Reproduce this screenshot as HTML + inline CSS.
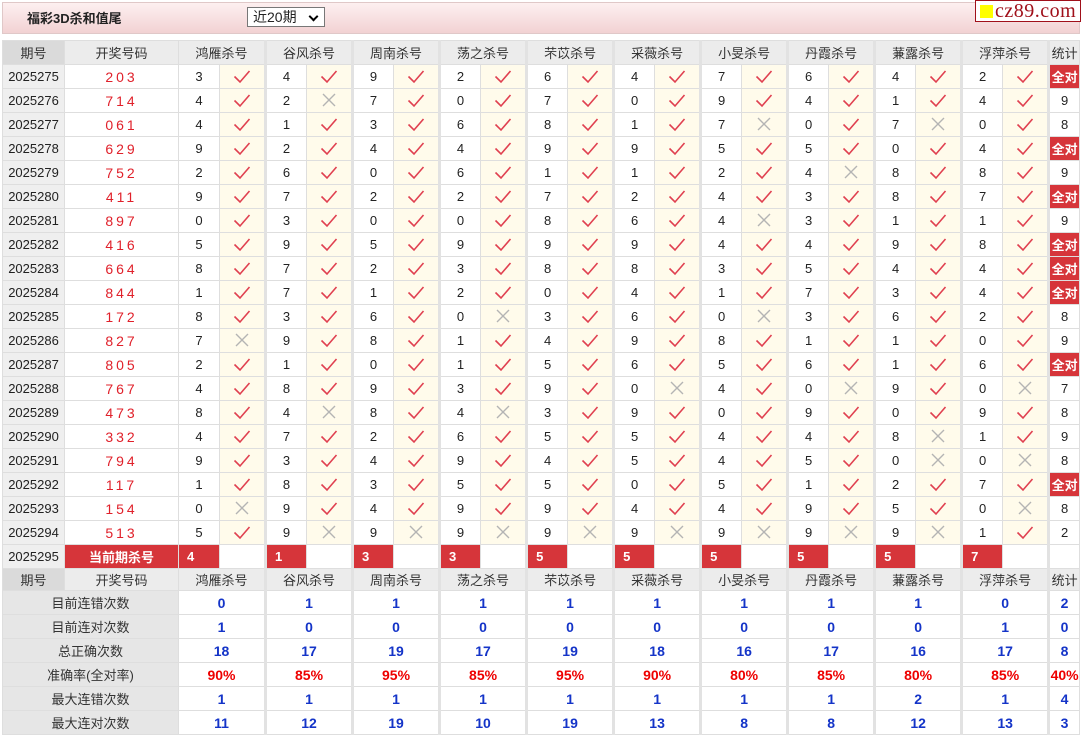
<!DOCTYPE html>
<html><head><meta charset="utf-8"><style>
*{margin:0;padding:0;box-sizing:border-box}
body{width:1082px;height:737px;background:#fff;font-family:"Liberation Sans","Noto Sans CJK SC",sans-serif;font-size:13px;color:#222;position:relative;overflow:hidden}
.bn{position:absolute;left:2px;top:2px;width:1078px;height:32px;background:linear-gradient(#fdf0f0,#f2d2d3);border:1px solid #e0c8c8}
.tt{position:absolute;left:24px;top:5px;font-weight:bold;font-size:13px;color:#222}
.sel{position:absolute;left:244px;top:4px;width:78px;height:20px;border:1px solid #777;background:#fff;font-size:14px;padding-left:5px;line-height:18px}
.sel:after{content:"";position:absolute;right:7px;top:5px;width:5px;height:5px;border-right:2px solid #000;border-bottom:2px solid #000;transform:rotate(45deg)}
.lg{position:absolute;left:975px;top:0;width:106px;height:22px;border:1px solid #a0101a;background:#fff;font-family:"Liberation Serif",serif;font-size:20px;color:#a0101a;line-height:20px;padding-left:4px;letter-spacing:.5px}
.lg i{display:inline-block;width:13px;height:13px;background:#ffff00;margin-right:2px;vertical-align:-1px}
table{position:absolute;left:2px;top:40px;border-collapse:collapse;table-layout:fixed;width:1078px}
td{height:24px;border:1px solid #dedede;text-align:center;padding:0;font-size:13px;white-space:nowrap}
tr.h2 td{height:22px}
tr.h td{background:#ececec;color:#333}
tr.h td.p{background:#dadada}
td.p{background:#efefef;font-size:13px}
td.k{color:#e0202a;letter-spacing:3px;font-size:14px}
td.m{background:#fffbeb;border-right:3px solid #e2e2e2}
td.gs{border-right:3px solid #e2e2e2}
td.q{background:#d6353a;color:#fff;font-weight:bold;text-align:left;padding-left:8px}
td.q2{background:#d6353a;color:#fff;font-weight:bold}
td.a{background:#d6353a;color:#fff;font-weight:bold}
td.l{background:#e6e6e6;color:#333}
td.b{color:#1434c8;font-weight:bold;font-size:14px;border-right:3px solid #e2e2e2}
td.r{color:#e00;font-weight:bold;font-size:14px;border-right:3px solid #e2e2e2}
td.bs{color:#1434c8;font-weight:bold;font-size:14px}
td.rs{color:#e00;font-weight:bold;font-size:14px}
svg{width:20px;height:18px;display:block;margin:0 auto}
</style></head><body>
<svg style="display:none"><defs>
<symbol id="c" viewBox="0 0 20 18"><path d="M2.5 8.5 L8 14 L17.5 3" fill="none" stroke="#e04050" stroke-width="1.6"/></symbol>
<symbol id="x" viewBox="0 0 20 18"><path d="M4 2 L16 14 M16 2 L4 14" fill="none" stroke="#b4b4b4" stroke-width="1.4"/></symbol>
</defs></svg>
<div class="bn"><div class="tt">福彩3D杀和值尾</div><div class="sel">近20期</div></div>
<div class="lg"><i></i>cz89.com</div>
<table>
<colgroup><col style="width:62px"><col style="width:114px">
<col style="width:41px"><col style="width:46px"><col style="width:41px"><col style="width:46px"><col style="width:41px"><col style="width:46px"><col style="width:41px"><col style="width:46px"><col style="width:41px"><col style="width:46px"><col style="width:41px"><col style="width:46px"><col style="width:41px"><col style="width:46px"><col style="width:41px"><col style="width:46px"><col style="width:41px"><col style="width:46px"><col style="width:41px"><col style="width:46px">
<col></colgroup>
<tr class="h"><td class="p">期号</td><td>开奖号码</td><td colspan="2" class="gs">鸿雁杀号</td><td colspan="2" class="gs">谷风杀号</td><td colspan="2" class="gs">周南杀号</td><td colspan="2" class="gs">荡之杀号</td><td colspan="2" class="gs">芣苡杀号</td><td colspan="2" class="gs">采薇杀号</td><td colspan="2" class="gs">小旻杀号</td><td colspan="2" class="gs">丹霞杀号</td><td colspan="2" class="gs">蒹露杀号</td><td colspan="2" class="gs">浮萍杀号</td><td>统计</td></tr>
<tr><td class="p">2025275</td><td class="k">203</td><td>3</td><td class="m"><svg><use href="#c"/></svg></td><td>4</td><td class="m"><svg><use href="#c"/></svg></td><td>9</td><td class="m"><svg><use href="#c"/></svg></td><td>2</td><td class="m"><svg><use href="#c"/></svg></td><td>6</td><td class="m"><svg><use href="#c"/></svg></td><td>4</td><td class="m"><svg><use href="#c"/></svg></td><td>7</td><td class="m"><svg><use href="#c"/></svg></td><td>6</td><td class="m"><svg><use href="#c"/></svg></td><td>4</td><td class="m"><svg><use href="#c"/></svg></td><td>2</td><td class="m"><svg><use href="#c"/></svg></td><td class="a">全对</td></tr>
<tr><td class="p">2025276</td><td class="k">714</td><td>4</td><td class="m"><svg><use href="#c"/></svg></td><td>2</td><td class="m"><svg><use href="#x"/></svg></td><td>7</td><td class="m"><svg><use href="#c"/></svg></td><td>0</td><td class="m"><svg><use href="#c"/></svg></td><td>7</td><td class="m"><svg><use href="#c"/></svg></td><td>0</td><td class="m"><svg><use href="#c"/></svg></td><td>9</td><td class="m"><svg><use href="#c"/></svg></td><td>4</td><td class="m"><svg><use href="#c"/></svg></td><td>1</td><td class="m"><svg><use href="#c"/></svg></td><td>4</td><td class="m"><svg><use href="#c"/></svg></td><td>9</td></tr>
<tr><td class="p">2025277</td><td class="k">061</td><td>4</td><td class="m"><svg><use href="#c"/></svg></td><td>1</td><td class="m"><svg><use href="#c"/></svg></td><td>3</td><td class="m"><svg><use href="#c"/></svg></td><td>6</td><td class="m"><svg><use href="#c"/></svg></td><td>8</td><td class="m"><svg><use href="#c"/></svg></td><td>1</td><td class="m"><svg><use href="#c"/></svg></td><td>7</td><td class="m"><svg><use href="#x"/></svg></td><td>0</td><td class="m"><svg><use href="#c"/></svg></td><td>7</td><td class="m"><svg><use href="#x"/></svg></td><td>0</td><td class="m"><svg><use href="#c"/></svg></td><td>8</td></tr>
<tr><td class="p">2025278</td><td class="k">629</td><td>9</td><td class="m"><svg><use href="#c"/></svg></td><td>2</td><td class="m"><svg><use href="#c"/></svg></td><td>4</td><td class="m"><svg><use href="#c"/></svg></td><td>4</td><td class="m"><svg><use href="#c"/></svg></td><td>9</td><td class="m"><svg><use href="#c"/></svg></td><td>9</td><td class="m"><svg><use href="#c"/></svg></td><td>5</td><td class="m"><svg><use href="#c"/></svg></td><td>5</td><td class="m"><svg><use href="#c"/></svg></td><td>0</td><td class="m"><svg><use href="#c"/></svg></td><td>4</td><td class="m"><svg><use href="#c"/></svg></td><td class="a">全对</td></tr>
<tr><td class="p">2025279</td><td class="k">752</td><td>2</td><td class="m"><svg><use href="#c"/></svg></td><td>6</td><td class="m"><svg><use href="#c"/></svg></td><td>0</td><td class="m"><svg><use href="#c"/></svg></td><td>6</td><td class="m"><svg><use href="#c"/></svg></td><td>1</td><td class="m"><svg><use href="#c"/></svg></td><td>1</td><td class="m"><svg><use href="#c"/></svg></td><td>2</td><td class="m"><svg><use href="#c"/></svg></td><td>4</td><td class="m"><svg><use href="#x"/></svg></td><td>8</td><td class="m"><svg><use href="#c"/></svg></td><td>8</td><td class="m"><svg><use href="#c"/></svg></td><td>9</td></tr>
<tr><td class="p">2025280</td><td class="k">411</td><td>9</td><td class="m"><svg><use href="#c"/></svg></td><td>7</td><td class="m"><svg><use href="#c"/></svg></td><td>2</td><td class="m"><svg><use href="#c"/></svg></td><td>2</td><td class="m"><svg><use href="#c"/></svg></td><td>7</td><td class="m"><svg><use href="#c"/></svg></td><td>2</td><td class="m"><svg><use href="#c"/></svg></td><td>4</td><td class="m"><svg><use href="#c"/></svg></td><td>3</td><td class="m"><svg><use href="#c"/></svg></td><td>8</td><td class="m"><svg><use href="#c"/></svg></td><td>7</td><td class="m"><svg><use href="#c"/></svg></td><td class="a">全对</td></tr>
<tr><td class="p">2025281</td><td class="k">897</td><td>0</td><td class="m"><svg><use href="#c"/></svg></td><td>3</td><td class="m"><svg><use href="#c"/></svg></td><td>0</td><td class="m"><svg><use href="#c"/></svg></td><td>0</td><td class="m"><svg><use href="#c"/></svg></td><td>8</td><td class="m"><svg><use href="#c"/></svg></td><td>6</td><td class="m"><svg><use href="#c"/></svg></td><td>4</td><td class="m"><svg><use href="#x"/></svg></td><td>3</td><td class="m"><svg><use href="#c"/></svg></td><td>1</td><td class="m"><svg><use href="#c"/></svg></td><td>1</td><td class="m"><svg><use href="#c"/></svg></td><td>9</td></tr>
<tr><td class="p">2025282</td><td class="k">416</td><td>5</td><td class="m"><svg><use href="#c"/></svg></td><td>9</td><td class="m"><svg><use href="#c"/></svg></td><td>5</td><td class="m"><svg><use href="#c"/></svg></td><td>9</td><td class="m"><svg><use href="#c"/></svg></td><td>9</td><td class="m"><svg><use href="#c"/></svg></td><td>9</td><td class="m"><svg><use href="#c"/></svg></td><td>4</td><td class="m"><svg><use href="#c"/></svg></td><td>4</td><td class="m"><svg><use href="#c"/></svg></td><td>9</td><td class="m"><svg><use href="#c"/></svg></td><td>8</td><td class="m"><svg><use href="#c"/></svg></td><td class="a">全对</td></tr>
<tr><td class="p">2025283</td><td class="k">664</td><td>8</td><td class="m"><svg><use href="#c"/></svg></td><td>7</td><td class="m"><svg><use href="#c"/></svg></td><td>2</td><td class="m"><svg><use href="#c"/></svg></td><td>3</td><td class="m"><svg><use href="#c"/></svg></td><td>8</td><td class="m"><svg><use href="#c"/></svg></td><td>8</td><td class="m"><svg><use href="#c"/></svg></td><td>3</td><td class="m"><svg><use href="#c"/></svg></td><td>5</td><td class="m"><svg><use href="#c"/></svg></td><td>4</td><td class="m"><svg><use href="#c"/></svg></td><td>4</td><td class="m"><svg><use href="#c"/></svg></td><td class="a">全对</td></tr>
<tr><td class="p">2025284</td><td class="k">844</td><td>1</td><td class="m"><svg><use href="#c"/></svg></td><td>7</td><td class="m"><svg><use href="#c"/></svg></td><td>1</td><td class="m"><svg><use href="#c"/></svg></td><td>2</td><td class="m"><svg><use href="#c"/></svg></td><td>0</td><td class="m"><svg><use href="#c"/></svg></td><td>4</td><td class="m"><svg><use href="#c"/></svg></td><td>1</td><td class="m"><svg><use href="#c"/></svg></td><td>7</td><td class="m"><svg><use href="#c"/></svg></td><td>3</td><td class="m"><svg><use href="#c"/></svg></td><td>4</td><td class="m"><svg><use href="#c"/></svg></td><td class="a">全对</td></tr>
<tr><td class="p">2025285</td><td class="k">172</td><td>8</td><td class="m"><svg><use href="#c"/></svg></td><td>3</td><td class="m"><svg><use href="#c"/></svg></td><td>6</td><td class="m"><svg><use href="#c"/></svg></td><td>0</td><td class="m"><svg><use href="#x"/></svg></td><td>3</td><td class="m"><svg><use href="#c"/></svg></td><td>6</td><td class="m"><svg><use href="#c"/></svg></td><td>0</td><td class="m"><svg><use href="#x"/></svg></td><td>3</td><td class="m"><svg><use href="#c"/></svg></td><td>6</td><td class="m"><svg><use href="#c"/></svg></td><td>2</td><td class="m"><svg><use href="#c"/></svg></td><td>8</td></tr>
<tr><td class="p">2025286</td><td class="k">827</td><td>7</td><td class="m"><svg><use href="#x"/></svg></td><td>9</td><td class="m"><svg><use href="#c"/></svg></td><td>8</td><td class="m"><svg><use href="#c"/></svg></td><td>1</td><td class="m"><svg><use href="#c"/></svg></td><td>4</td><td class="m"><svg><use href="#c"/></svg></td><td>9</td><td class="m"><svg><use href="#c"/></svg></td><td>8</td><td class="m"><svg><use href="#c"/></svg></td><td>1</td><td class="m"><svg><use href="#c"/></svg></td><td>1</td><td class="m"><svg><use href="#c"/></svg></td><td>0</td><td class="m"><svg><use href="#c"/></svg></td><td>9</td></tr>
<tr><td class="p">2025287</td><td class="k">805</td><td>2</td><td class="m"><svg><use href="#c"/></svg></td><td>1</td><td class="m"><svg><use href="#c"/></svg></td><td>0</td><td class="m"><svg><use href="#c"/></svg></td><td>1</td><td class="m"><svg><use href="#c"/></svg></td><td>5</td><td class="m"><svg><use href="#c"/></svg></td><td>6</td><td class="m"><svg><use href="#c"/></svg></td><td>5</td><td class="m"><svg><use href="#c"/></svg></td><td>6</td><td class="m"><svg><use href="#c"/></svg></td><td>1</td><td class="m"><svg><use href="#c"/></svg></td><td>6</td><td class="m"><svg><use href="#c"/></svg></td><td class="a">全对</td></tr>
<tr><td class="p">2025288</td><td class="k">767</td><td>4</td><td class="m"><svg><use href="#c"/></svg></td><td>8</td><td class="m"><svg><use href="#c"/></svg></td><td>9</td><td class="m"><svg><use href="#c"/></svg></td><td>3</td><td class="m"><svg><use href="#c"/></svg></td><td>9</td><td class="m"><svg><use href="#c"/></svg></td><td>0</td><td class="m"><svg><use href="#x"/></svg></td><td>4</td><td class="m"><svg><use href="#c"/></svg></td><td>0</td><td class="m"><svg><use href="#x"/></svg></td><td>9</td><td class="m"><svg><use href="#c"/></svg></td><td>0</td><td class="m"><svg><use href="#x"/></svg></td><td>7</td></tr>
<tr><td class="p">2025289</td><td class="k">473</td><td>8</td><td class="m"><svg><use href="#c"/></svg></td><td>4</td><td class="m"><svg><use href="#x"/></svg></td><td>8</td><td class="m"><svg><use href="#c"/></svg></td><td>4</td><td class="m"><svg><use href="#x"/></svg></td><td>3</td><td class="m"><svg><use href="#c"/></svg></td><td>9</td><td class="m"><svg><use href="#c"/></svg></td><td>0</td><td class="m"><svg><use href="#c"/></svg></td><td>9</td><td class="m"><svg><use href="#c"/></svg></td><td>0</td><td class="m"><svg><use href="#c"/></svg></td><td>9</td><td class="m"><svg><use href="#c"/></svg></td><td>8</td></tr>
<tr><td class="p">2025290</td><td class="k">332</td><td>4</td><td class="m"><svg><use href="#c"/></svg></td><td>7</td><td class="m"><svg><use href="#c"/></svg></td><td>2</td><td class="m"><svg><use href="#c"/></svg></td><td>6</td><td class="m"><svg><use href="#c"/></svg></td><td>5</td><td class="m"><svg><use href="#c"/></svg></td><td>5</td><td class="m"><svg><use href="#c"/></svg></td><td>4</td><td class="m"><svg><use href="#c"/></svg></td><td>4</td><td class="m"><svg><use href="#c"/></svg></td><td>8</td><td class="m"><svg><use href="#x"/></svg></td><td>1</td><td class="m"><svg><use href="#c"/></svg></td><td>9</td></tr>
<tr><td class="p">2025291</td><td class="k">794</td><td>9</td><td class="m"><svg><use href="#c"/></svg></td><td>3</td><td class="m"><svg><use href="#c"/></svg></td><td>4</td><td class="m"><svg><use href="#c"/></svg></td><td>9</td><td class="m"><svg><use href="#c"/></svg></td><td>4</td><td class="m"><svg><use href="#c"/></svg></td><td>5</td><td class="m"><svg><use href="#c"/></svg></td><td>4</td><td class="m"><svg><use href="#c"/></svg></td><td>5</td><td class="m"><svg><use href="#c"/></svg></td><td>0</td><td class="m"><svg><use href="#x"/></svg></td><td>0</td><td class="m"><svg><use href="#x"/></svg></td><td>8</td></tr>
<tr><td class="p">2025292</td><td class="k">117</td><td>1</td><td class="m"><svg><use href="#c"/></svg></td><td>8</td><td class="m"><svg><use href="#c"/></svg></td><td>3</td><td class="m"><svg><use href="#c"/></svg></td><td>5</td><td class="m"><svg><use href="#c"/></svg></td><td>5</td><td class="m"><svg><use href="#c"/></svg></td><td>0</td><td class="m"><svg><use href="#c"/></svg></td><td>5</td><td class="m"><svg><use href="#c"/></svg></td><td>1</td><td class="m"><svg><use href="#c"/></svg></td><td>2</td><td class="m"><svg><use href="#c"/></svg></td><td>7</td><td class="m"><svg><use href="#c"/></svg></td><td class="a">全对</td></tr>
<tr><td class="p">2025293</td><td class="k">154</td><td>0</td><td class="m"><svg><use href="#x"/></svg></td><td>9</td><td class="m"><svg><use href="#c"/></svg></td><td>4</td><td class="m"><svg><use href="#c"/></svg></td><td>9</td><td class="m"><svg><use href="#c"/></svg></td><td>9</td><td class="m"><svg><use href="#c"/></svg></td><td>4</td><td class="m"><svg><use href="#c"/></svg></td><td>4</td><td class="m"><svg><use href="#c"/></svg></td><td>9</td><td class="m"><svg><use href="#c"/></svg></td><td>5</td><td class="m"><svg><use href="#c"/></svg></td><td>0</td><td class="m"><svg><use href="#x"/></svg></td><td>8</td></tr>
<tr><td class="p">2025294</td><td class="k">513</td><td>5</td><td class="m"><svg><use href="#c"/></svg></td><td>9</td><td class="m"><svg><use href="#x"/></svg></td><td>9</td><td class="m"><svg><use href="#x"/></svg></td><td>9</td><td class="m"><svg><use href="#x"/></svg></td><td>9</td><td class="m"><svg><use href="#x"/></svg></td><td>9</td><td class="m"><svg><use href="#x"/></svg></td><td>9</td><td class="m"><svg><use href="#x"/></svg></td><td>9</td><td class="m"><svg><use href="#x"/></svg></td><td>9</td><td class="m"><svg><use href="#x"/></svg></td><td>1</td><td class="m"><svg><use href="#c"/></svg></td><td>2</td></tr>
<tr><td class="p">2025295</td><td class="q2">当前期杀号</td><td class="q">4</td><td class="gs"></td><td class="q">1</td><td class="gs"></td><td class="q">3</td><td class="gs"></td><td class="q">3</td><td class="gs"></td><td class="q">5</td><td class="gs"></td><td class="q">5</td><td class="gs"></td><td class="q">5</td><td class="gs"></td><td class="q">5</td><td class="gs"></td><td class="q">5</td><td class="gs"></td><td class="q">7</td><td class="gs"></td><td></td></tr>
<tr class="h h2"><td class="p">期号</td><td>开奖号码</td><td colspan="2" class="gs">鸿雁杀号</td><td colspan="2" class="gs">谷风杀号</td><td colspan="2" class="gs">周南杀号</td><td colspan="2" class="gs">荡之杀号</td><td colspan="2" class="gs">芣苡杀号</td><td colspan="2" class="gs">采薇杀号</td><td colspan="2" class="gs">小旻杀号</td><td colspan="2" class="gs">丹霞杀号</td><td colspan="2" class="gs">蒹露杀号</td><td colspan="2" class="gs">浮萍杀号</td><td>统计</td></tr>
<tr><td colspan="2" class="l">目前连错次数</td><td colspan="2" class="b">0</td><td colspan="2" class="b">1</td><td colspan="2" class="b">1</td><td colspan="2" class="b">1</td><td colspan="2" class="b">1</td><td colspan="2" class="b">1</td><td colspan="2" class="b">1</td><td colspan="2" class="b">1</td><td colspan="2" class="b">1</td><td colspan="2" class="b">0</td><td class="bs">2</td></tr>
<tr><td colspan="2" class="l">目前连对次数</td><td colspan="2" class="b">1</td><td colspan="2" class="b">0</td><td colspan="2" class="b">0</td><td colspan="2" class="b">0</td><td colspan="2" class="b">0</td><td colspan="2" class="b">0</td><td colspan="2" class="b">0</td><td colspan="2" class="b">0</td><td colspan="2" class="b">0</td><td colspan="2" class="b">1</td><td class="bs">0</td></tr>
<tr><td colspan="2" class="l">总正确次数</td><td colspan="2" class="b">18</td><td colspan="2" class="b">17</td><td colspan="2" class="b">19</td><td colspan="2" class="b">17</td><td colspan="2" class="b">19</td><td colspan="2" class="b">18</td><td colspan="2" class="b">16</td><td colspan="2" class="b">17</td><td colspan="2" class="b">16</td><td colspan="2" class="b">17</td><td class="bs">8</td></tr>
<tr><td colspan="2" class="l">准确率(全对率)</td><td colspan="2" class="r">90%</td><td colspan="2" class="r">85%</td><td colspan="2" class="r">95%</td><td colspan="2" class="r">85%</td><td colspan="2" class="r">95%</td><td colspan="2" class="r">90%</td><td colspan="2" class="r">80%</td><td colspan="2" class="r">85%</td><td colspan="2" class="r">80%</td><td colspan="2" class="r">85%</td><td class="rs">40%</td></tr>
<tr><td colspan="2" class="l">最大连错次数</td><td colspan="2" class="b">1</td><td colspan="2" class="b">1</td><td colspan="2" class="b">1</td><td colspan="2" class="b">1</td><td colspan="2" class="b">1</td><td colspan="2" class="b">1</td><td colspan="2" class="b">1</td><td colspan="2" class="b">1</td><td colspan="2" class="b">2</td><td colspan="2" class="b">1</td><td class="bs">4</td></tr>
<tr><td colspan="2" class="l">最大连对次数</td><td colspan="2" class="b">11</td><td colspan="2" class="b">12</td><td colspan="2" class="b">19</td><td colspan="2" class="b">10</td><td colspan="2" class="b">19</td><td colspan="2" class="b">13</td><td colspan="2" class="b">8</td><td colspan="2" class="b">8</td><td colspan="2" class="b">12</td><td colspan="2" class="b">13</td><td class="bs">3</td></tr>
</table>
</body></html>
